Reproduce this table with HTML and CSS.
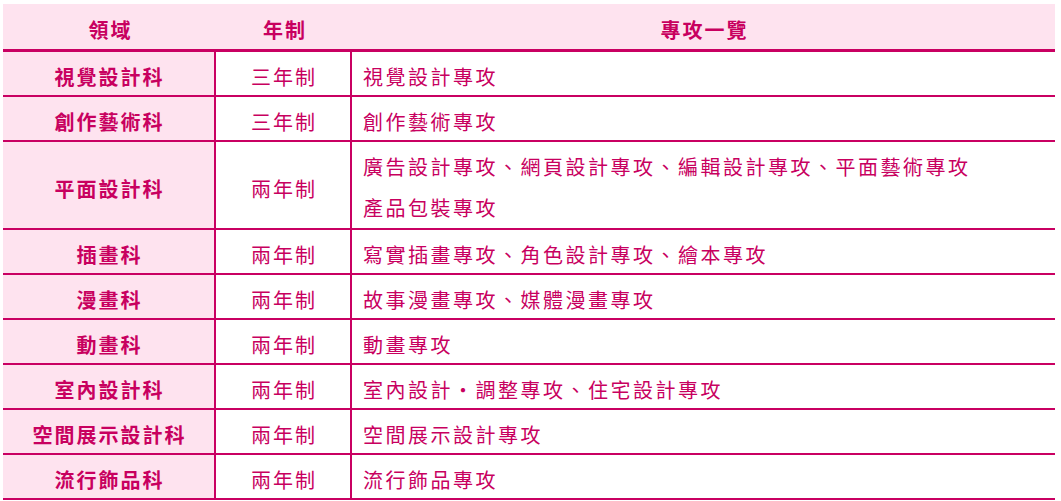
FILE: index.html
```html
<!DOCTYPE html>
<html lang="zh-Hant">
<head>
<meta charset="utf-8">
<title>專攻一覽</title>
<link rel="stylesheet" href="styles.css">
</head>
<body>
<table class="majors">
  <colgroup>
    <col class="c-field">
    <col class="c-years">
    <col class="c-list">
  </colgroup>
  <thead>
    <tr>
      <th>領域</th>
      <th>年制</th>
      <th>專攻一覽</th>
    </tr>
  </thead>
  <tbody>
    <tr>
      <td class="field">視覺設計科</td>
      <td class="years">三年制</td>
      <td class="list">視覺設計專攻</td>
    </tr>
    <tr>
      <td class="field">創作藝術科</td>
      <td class="years">三年制</td>
      <td class="list">創作藝術專攻</td>
    </tr>
    <tr class="tall">
      <td class="field">平面設計科</td>
      <td class="years">兩年制</td>
      <td class="list">廣告設計專攻、網頁設計專攻、編輯設計專攻、平面藝術專攻<br>產品包裝專攻</td>
    </tr>
    <tr>
      <td class="field">插畫科</td>
      <td class="years">兩年制</td>
      <td class="list">寫實插畫專攻、角色設計專攻、繪本專攻</td>
    </tr>
    <tr>
      <td class="field">漫畫科</td>
      <td class="years">兩年制</td>
      <td class="list">故事漫畫專攻、媒體漫畫專攻</td>
    </tr>
    <tr>
      <td class="field">動畫科</td>
      <td class="years">兩年制</td>
      <td class="list">動畫專攻</td>
    </tr>
    <tr>
      <td class="field">室內設計科</td>
      <td class="years">兩年制</td>
      <td class="list">室內設計・調整專攻、住宅設計專攻</td>
    </tr>
    <tr>
      <td class="field">空間展示設計科</td>
      <td class="years">兩年制</td>
      <td class="list">空間展示設計專攻</td>
    </tr>
    <tr>
      <td class="field">流行飾品科</td>
      <td class="years">兩年制</td>
      <td class="list">流行飾品專攻</td>
    </tr>
  </tbody>
</table>
</body>
</html>
```
FILE: styles.css
```css
html, body {
  margin: 0;
  padding: 0;
  background: #ffffff;
}

body {
  font-family: "Noto Sans CJK TC", "Noto Sans CJK JP", "Noto Sans", sans-serif;
  color: #c8005f;
}

.majors {
  margin: 4px 0 0 3px;
  width: 1052px;
  table-layout: fixed;
  border-collapse: separate;
  border-spacing: 0;
  font-size: 20px;
  letter-spacing: 2px;
}

.c-field { width: 213px; }
.c-years { width: 136px; }
.c-list { width: 703px; }

.majors th {
  box-sizing: border-box;
  height: 48px;
  padding: 6px 0 0 2px;
  background: #fee3ef;
  border-bottom: 3px solid #c90062;
  font-weight: 700;
  text-align: center;
  vertical-align: middle;
  line-height: 28px;
}

.majors td {
  box-sizing: border-box;
  height: 45px;
  padding: 6px 0 0 0;
  border-bottom: 2px solid #c90062;
  vertical-align: middle;
  line-height: 37px;
}

.majors tbody tr:last-child td {
  height: 44px;
}

.majors tr.tall td {
  height: 88px;
}

.majors td.field {
  background: #fee3ef;
  border-right: 2px solid #c90062;
  font-weight: 700;
  text-align: center;
  padding-left: 2px;
}

.majors td.years {
  border-right: 2px solid #c90062;
  text-align: center;
  padding-left: 2px;
}

.majors td.list {
  text-align: left;
  padding-left: 11px;
  letter-spacing: 2.5px;
}

.majors tr.tall td.list {
  vertical-align: top;
  padding-top: 4px;
  line-height: 41px;
}
```
